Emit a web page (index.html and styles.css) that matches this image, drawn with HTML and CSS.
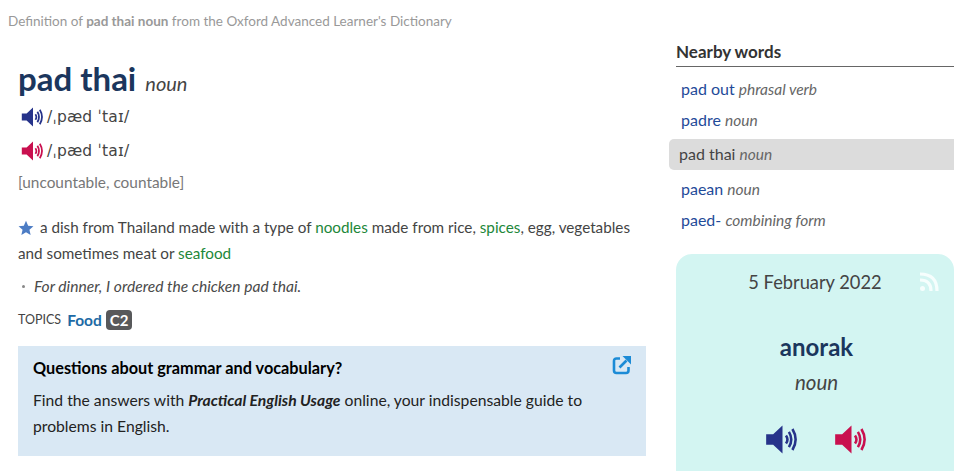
FILE: index.html
```html
<!DOCTYPE html>
<html>
	<head>
		<meta charset="utf-8">
		<title>pad thai noun</title>
		<link rel="stylesheet" href="styles.css">
	</head>
	<body>
		<svg class="defs" width="0" height="0">
			<symbol id="speaker" viewBox="0 0 30 30">
				<path class="cone" d="M1 10.500H7L15 3V27L7 19.500H1Z"/>
				<path class="waves" d="M18 11.500Q20.500 15 18 18.500M20.500 8.500Q24.500 15 20.500 21.500M23.500 6Q29 15 23.500 24"/>
			</symbol>
		</svg>
		<div class="page">
			<div class="main">
				<p class="crumb">Definition of <b>pad thai noun</b> from the Oxford Advanced Learner's Dictionary</p>
				<div class="entry">
					<h1 class="head">pad thai <i>noun</i></h1>
					<div class="phon"><svg class="spk uk"><use href="#speaker"/></svg><span>/ˌpæd ˈtaɪ/</span></div>
					<div class="phon us-row"><svg class="spk us"><use href="#speaker"/></svg><span>/ˌpæd ˈtaɪ/</span></div>
					<div class="gram">[uncountable, countable]</div>
					<p class="def">
						<svg class="star" viewBox="0 0 20 20"><path d="M10 1L12.700 7.200L19.300 7.800L14.300 12.200L15.800 18.800L10 15.300L4.200 18.800L5.700 12.200L0.700 7.800L7.300 7.200Z"/></svg>
						a dish from Thailand made with a type of <a>noodles</a> made from rice, <a>spices</a>, egg, vegetables and sometimes meat or <a>seafood</a>
					</p>
					<div class="example"><span class="dot"></span><i>For dinner, I ordered the chicken pad thai.</i></div>
					<div class="topics">TOPICS <a>Food</a> <span class="level">C2</span></div>
					<div class="promo">
						<svg class="ext" viewBox="0 0 20 20"><path class="ext-box" d="M8 3.500H4.500Q2 3.500 2 6V15.500Q2 18 4.500 18H14Q16.500 18 16.500 15.500V12"/><path class="ext-line" d="M7.500 12.500L14.500 5.500"/><path class="ext-tip" d="M10.500 1H19V9.500Z"/></svg>
						<h3>Questions about grammar and vocabulary?</h3>
						<p>Find the answers with <b><i>Practical English Usage</i></b> online, your indispensable guide to problems in English.</p>
					</div>
				</div>
			</div>
			<div class="side">
				<h2 class="side-title">Nearby words</h2>
				<ul class="nearby">
					<li><a>pad out</a> <i>phrasal verb</i></li>
					<li><a>padre</a> <i>noun</i></li>
					<li class="current">pad thai <i>noun</i></li>
					<li><a>paean</a> <i>noun</i></li>
					<li><a>paed-</a> <i>combining form</i></li>
				</ul>
				<div class="wotd">
					<div class="wotd-date">5 February 2022
						<svg class="rss" viewBox="0 0 20 20"><circle cx="3.500" cy="16.500" r="2.500"/><path d="M1 8Q12 8 12 19M1 2Q18 2 18 19"/></svg>
					</div>
					<div class="wotd-word">anorak</div>
					<div class="wotd-pos"><i>noun</i></div>
					<div class="wotd-audio">
						<svg class="spk-big uk"><use href="#speaker"/></svg>
						<svg class="spk-big us"><use href="#speaker"/></svg>
					</div>
				</div>
			</div>
		</div>
	</body>
</html>
```

FILE: styles.css
```css
*{margin: 0;padding: 0;box-sizing: border-box;}
html,body{height: 471px;overflow: hidden;}
body{
	font-family: "Lato", "Noto Sans", sans-serif;
	font-size: 15.250px;
	color: #444;
	background: #fff;
}
.defs{position: absolute;}
.cone{stroke: none;fill: currentColor;}
.waves{fill: none;stroke: currentColor;stroke-width: 2.200;}
.uk{color: #26338a;}
.us{color: #c9104f;}
.page{display: flex;}
.main{width: 646px;flex: none;margin-right: 23px;}
.crumb{
	padding: 13px 0 0 8px;
	font-size: 13.500px;
	line-height: 17px;
	color: #999;
}
.entry{padding: 0 0 0 18px;}
.head{
	margin-top: 31px;
	font-size: 33px;
	line-height: 34px;
	font-weight: 700;
	color: #1b365d;
}
.head i{font-size: 20px;font-weight: 400;color: #444;margin-left: 1px;}
.phon{
	display: flex;
	align-items: center;
	height: 34px;
	font-family: "DejaVu Sans", sans-serif;
	font-size: 15.500px;
	letter-spacing: 0.200px;
}
.spk{width: 24px;height: 24px;margin: 0 2px 0 3px;flex: none;}
.gram{margin-top: 4px;line-height: 20px;color: #777;font-size: 15.400px;}
.def{margin-top: 22px;line-height: 26px;}
.def a{color: #218739;}
.star{width: 16px;height: 16px;fill: #4c7cc4;vertical-align: -3px;margin-right: 2px;}
.example{margin-top: 7px;line-height: 26px;display: flex;align-items: center;font-size: 15.600px;color: #4a4a4a;}
.dot{width: 3px;height: 3px;border-radius: 50%;background: #888;margin: 0 9px 0 4px;}
.topics{margin-top: 11px;font-size: 12.500px;line-height: 20px;display: flex;align-items: center;gap: 6px;}
.topics a{font-size: 15.500px;font-weight: 700;color: #1d6aa5;}
.level{
	background: #58595b;
	color: #fff;
	font-size: 15px;
	font-weight: 700;
	border-radius: 4px;
	padding: 0 4px;
	line-height: 20px;
	margin-left: -2px;
}
.promo{
	position: relative;
	margin-top: 16px;
	width: 628px;
	height: 110px;
	padding: 12px 15px;
	background: #d9e8f4;
	color: #222;
	font-size: 15.700px;
}
.promo h3{font-size: 16.300px;line-height: 20px;font-weight: 700;color: #000;}
.promo p{margin-top: 9px;line-height: 26px;}
.ext{position: absolute;top: 9px;right: 14px;width: 20px;height: 20px;}
.ext-box,.ext-line{fill: none;stroke: #1c8bd6;stroke-width: 2.600;}
.ext-tip{fill: #1c8bd6;}
.side{flex: 1;}
.side-title{
	margin: 41px 0 0 7px;
	height: 26px;
	font-size: 17px;
	line-height: 22px;
	font-weight: 700;
	color: #333;
	border-bottom: 1px solid #666;
}
.nearby{list-style: none;margin-top: 6px;font-size: 16px;}
.nearby li{padding-left: 12px;height: 31px;line-height: 31px;color: #666;}
.nearby li a{color: #1f4b99;}
.nearby li i{font-size: 15.500px;}
.nearby .current{
	margin: 4px 0 3px;
	padding-left: 10px;
	line-height: 29px;
	background: #dcdcdc;
	border-radius: 5px 0 0 5px;
	color: #444;
}
.nearby .current i{color: #666;}
.wotd{
	margin: 19px 0 0 7px;
	height: 220px;
	background: #d3f5f2;
	border-radius: 16px 16px 0 0;
	text-align: center;
}
.wotd-date{
	position: relative;
	padding-top: 15px;
	font-size: 18.300px;
	line-height: 26px;
}
.rss{position: absolute;top: 18px;right: 15px;width: 20px;height: 20px;}
.rss circle{fill: #f6fefd;}
.rss path{fill: none;stroke: #f6fefd;stroke-width: 3.200;}
.wotd-word{margin-top: 35px;padding-left: 3px;font-size: 24px;line-height: 34px;font-weight: 700;color: #1b365d;}
.wotd-pos{margin-top: 5px;padding-left: 3px;font-size: 20.500px;line-height: 26px;}
.wotd-audio{margin-top: 27px;padding-left: 4px;display: flex;justify-content: center;gap: 34px;}
.spk-big{width: 35px;height: 35px;}
```
